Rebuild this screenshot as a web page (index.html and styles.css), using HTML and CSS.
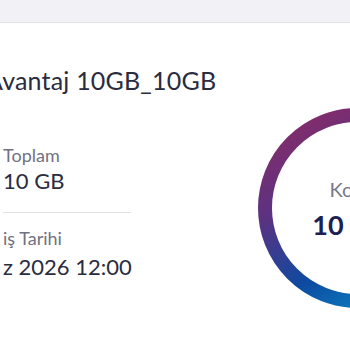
FILE: index.html
```html
<!DOCTYPE html>
<html lang="tr">
<head>
<meta charset="utf-8">
<link rel="stylesheet" href="styles.css">
</head>
<body>
<div class="topbar"></div>
<main class="card">
  <h1 class="title">Avantaj 10GB_10GB</h1>
  <div class="card-body">
    <div class="info">
      <div class="item">
        <div class="label">Toplam</div>
        <div class="value">10 GB</div>
      </div>
      <div class="item item-date">
        <div class="label"><span class="clip">Bit</span>iş Tarihi</div>
        <div class="value"><span class="clip">31 Temmu</span>z 2026 12:00</div>
      </div>
    </div>
    <div class="gauge">
      <svg class="ring" width="200" height="200" viewBox="0 0 200 200">
        <defs>
          <linearGradient id="rg" x1="0.2" y1="0" x2="0.75" y2="1">
            <stop offset="0" stop-color="#842c6a"/>
            <stop offset="0.35" stop-color="#5a3282"/>
            <stop offset="0.7" stop-color="#0d4aa0"/>
            <stop offset="1" stop-color="#0a86c4"/>
          </linearGradient>
        </defs>
        <circle cx="100" cy="100" r="93" fill="none" stroke="url(#rg)" stroke-width="14"/>
      </svg>
      <div class="gauge-text">
        <div class="gauge-label">Kota</div>
        <div class="gauge-value">10 GB</div>
      </div>
    </div>
  </div>
</main>
</body>
</html>
```
FILE: styles.css
```css
html, body {
  margin: 0;
  padding: 0;
  width: 350px;
  height: 350px;
  overflow: hidden;
  background: #ffffff;
  font-family: "Lato", "Noto Sans", sans-serif;
}

.topbar {
  height: 22px;
  background: #f2f2f6;
  border-bottom: 1px solid #e2e2e8;
}

.card {
  margin-left: -14px;
  width: 480px;
}

.title {
  margin: 0;
  padding-top: 41px;
  font-size: 25px;
  line-height: 32px;
  font-weight: 400;
  color: #2a2c40;
  letter-spacing: 0.2px;
}

.card-body {
  display: flex;
  align-items: flex-start;
  margin-top: 21px;
}

.info {
  width: 128px;
  padding-left: 17px;
  padding-top: 27px;
}

.item {
  padding-bottom: 16px;
  border-bottom: 1px solid #e0e0e4;
}

.item-date {
  border-bottom: none;
  padding-top: 10px;
}

.item-date .value {
  line-height: 26px;
}

.label {
  font-size: 18px;
  line-height: 22px;
  color: #717182;
  white-space: nowrap;
}

.value {
  font-size: 22px;
  line-height: 30px;
  color: #2a2c40;
  white-space: nowrap;
}

.clip {
  display: inline-block;
  width: 0;
  overflow: hidden;
  visibility: hidden;
}

.gauge {
  position: relative;
  width: 200px;
  height: 200px;
  margin-left: 127px;
  margin-top: -9px;
  flex: none;
}

.ring {
  display: block;
}

.gauge-text {
  position: absolute;
  inset: 0;
  padding-right: 16px;
  display: flex;
  flex-direction: column;
  align-items: center;
  justify-content: center;
}

.gauge-label {
  font-size: 20px;
  line-height: 26px;
  color: #77778a;
  margin-bottom: 7px;
}

.gauge-value {
  font-size: 27px;
  line-height: 32px;
  font-weight: 700;
  color: #1b2150;
}
```
